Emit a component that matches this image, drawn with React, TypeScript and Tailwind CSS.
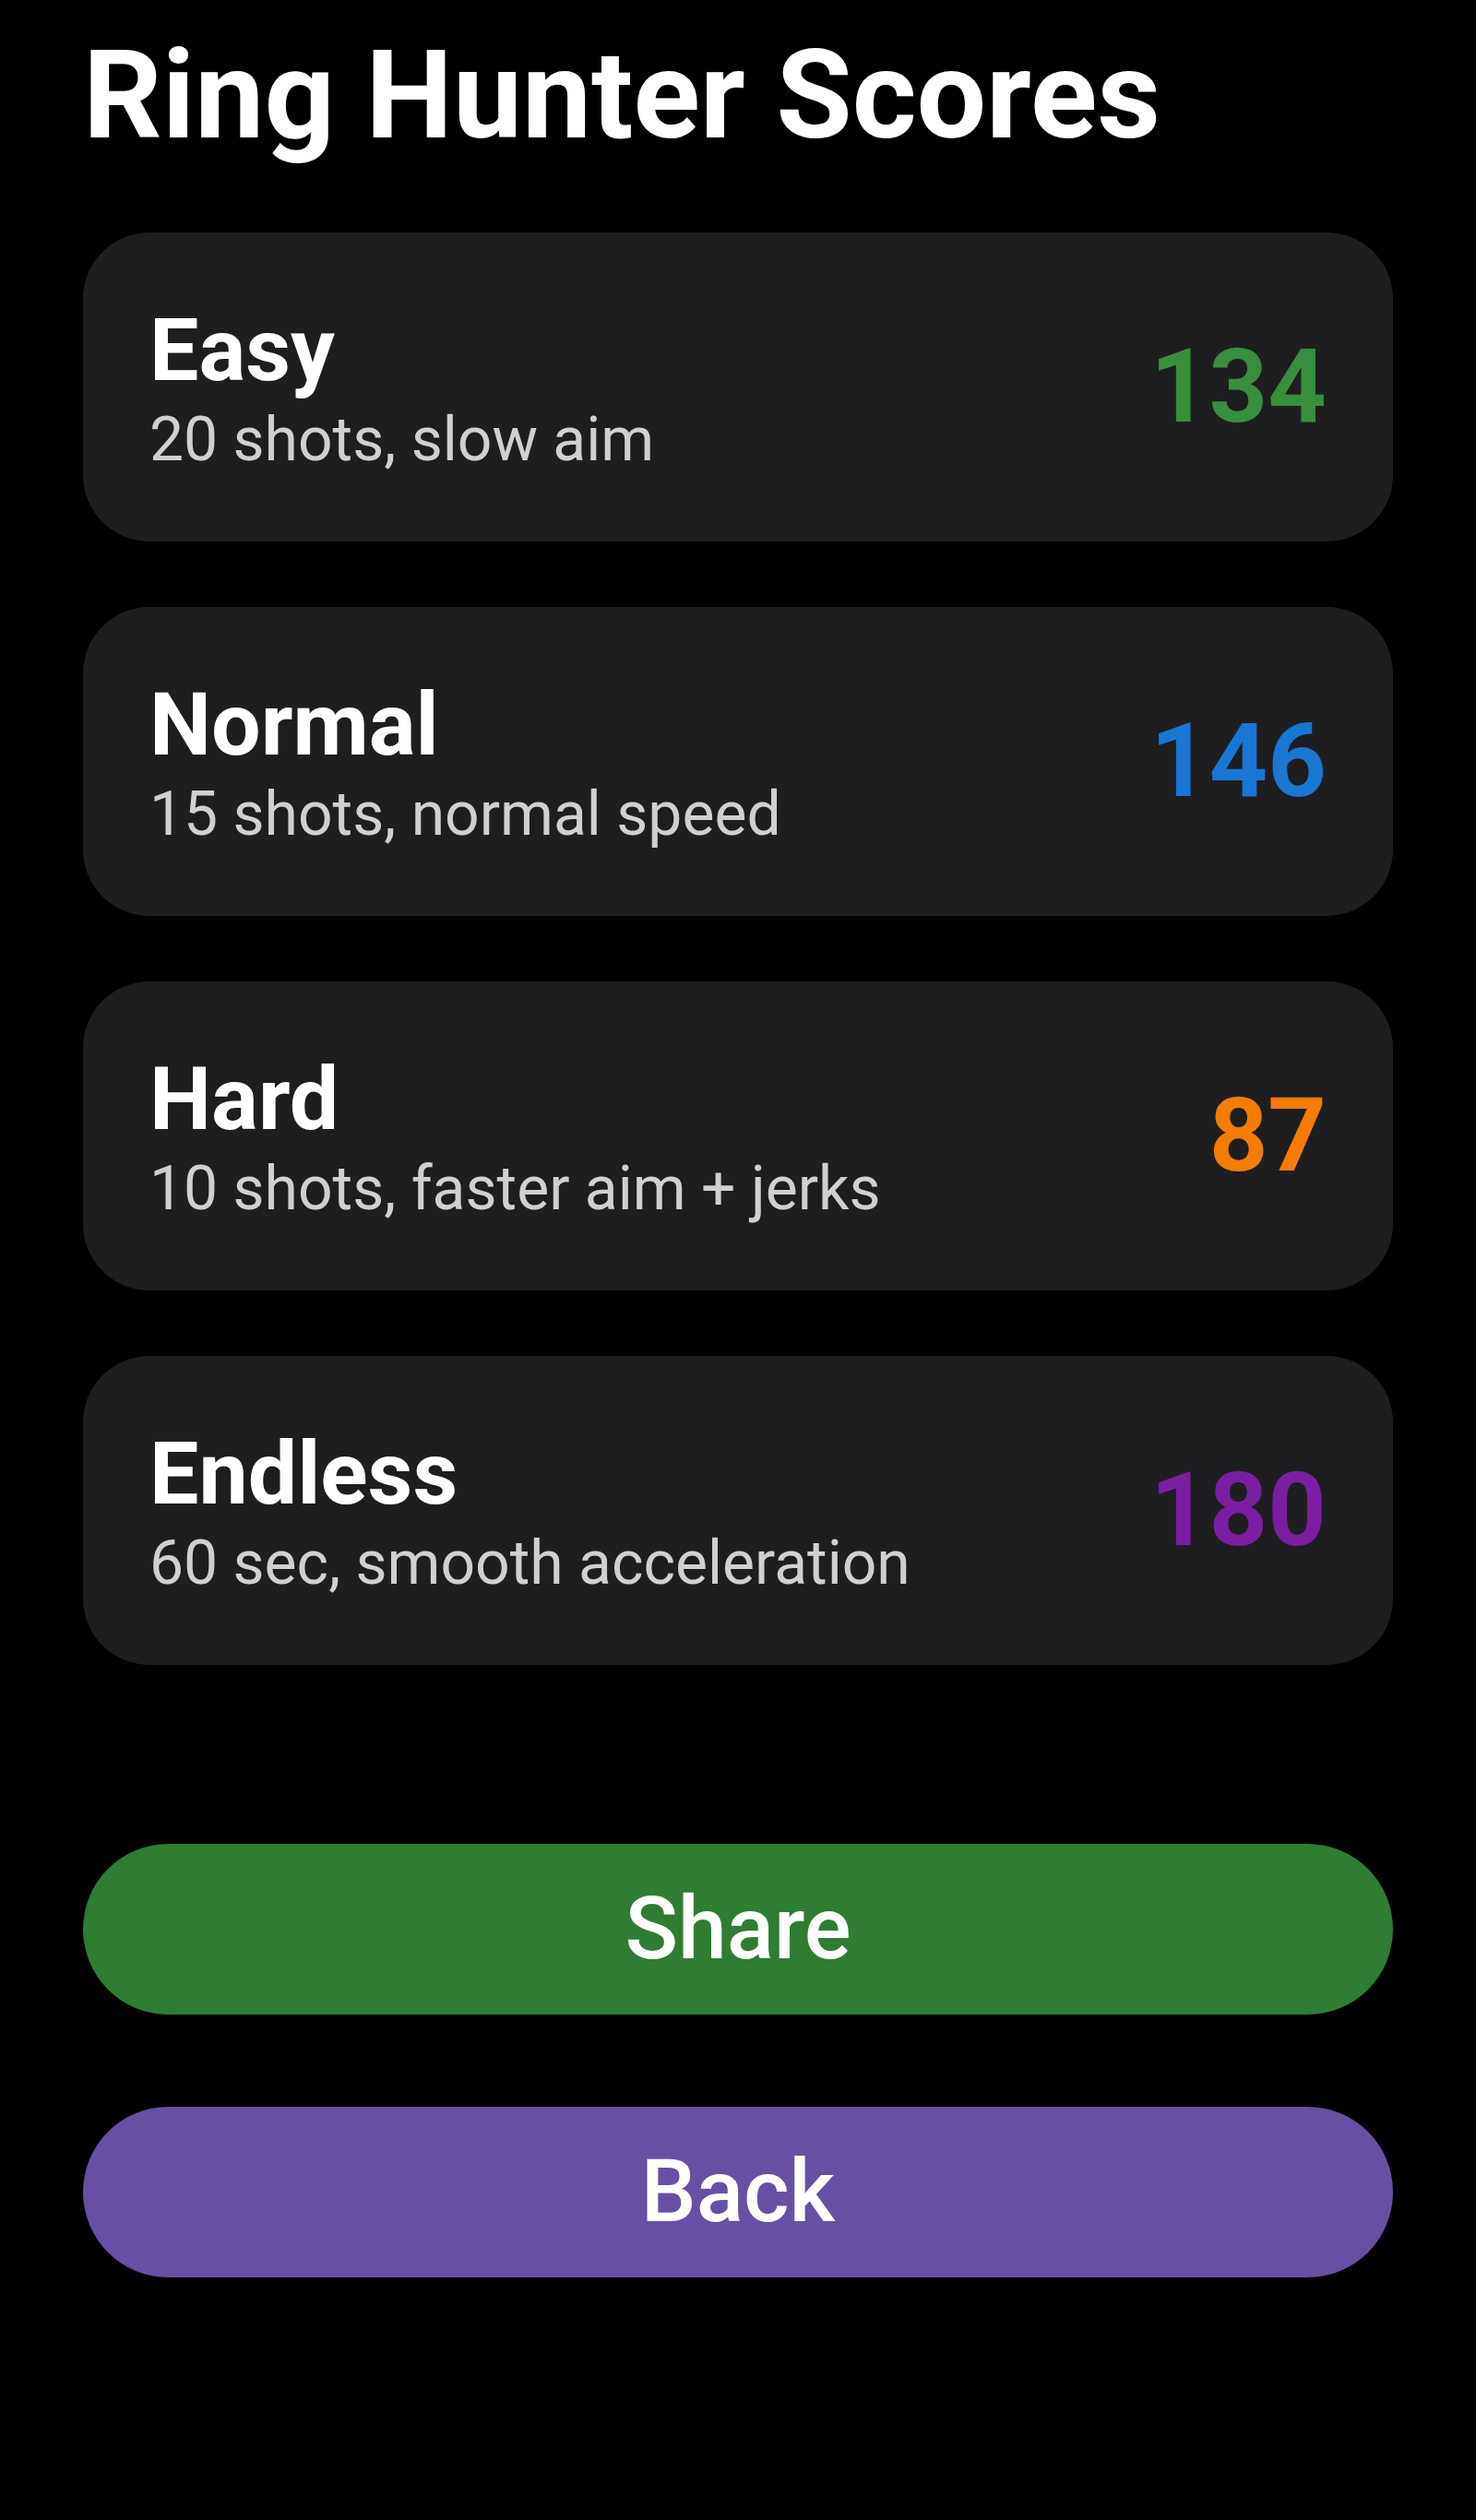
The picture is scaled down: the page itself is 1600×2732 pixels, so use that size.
import React from "react";

const modes = [
  { name: "Easy", desc: "20 shots, slow aim", score: "134", color: "text-[#388e3c]" },
  { name: "Normal", desc: "15 shots, normal speed", score: "146", color: "text-[#1976d2]" },
  { name: "Hard", desc: "10 shots, faster aim + jerks", score: "87", color: "text-[#f57c00]" },
  { name: "Endless", desc: "60 sec, smooth acceleration", score: "180", color: "text-[#7b1fa2]" },
];

export default function App() {
  return (
    <div
      className="min-h-[2732px] w-[1600px] bg-black px-[90px] pt-[24px]"
      style={{ fontFamily: "Roboto, 'Noto Sans', sans-serif" }}
    >
      <h1 className="text-[134px] font-bold leading-[1.2] text-white">Ring Hunter Scores</h1>
      <div className="mt-[67px] flex flex-col gap-[71px]">
        {modes.map((m) => (
          <div
            key={m.name}
            className="flex h-[335px] items-center justify-between rounded-[72px] bg-[#1e1e20] pl-[72px] pr-[72px]"
          >
            <div className="flex flex-col">
              <span className="text-[95px] font-bold leading-[1.2] text-white">{m.name}</span>
              <span className="text-[66px] leading-[1.2] text-[#d0d0d0]">{m.desc}</span>
            </div>
            <span className={`text-[111px] font-bold leading-none ${m.color}`}>{m.score}</span>
          </div>
        ))}
      </div>
      <div className="mt-[194px] flex flex-col gap-[100px]">
        <button className="flex h-[185px] w-full items-center justify-center rounded-full bg-[#2e7d32] text-[95px] font-medium text-white">
          Share
        </button>
        <button className="flex h-[185px] w-full items-center justify-center rounded-full bg-[#6750a4] text-[95px] font-medium text-white">
          Back
        </button>
      </div>
    </div>
  );
}
